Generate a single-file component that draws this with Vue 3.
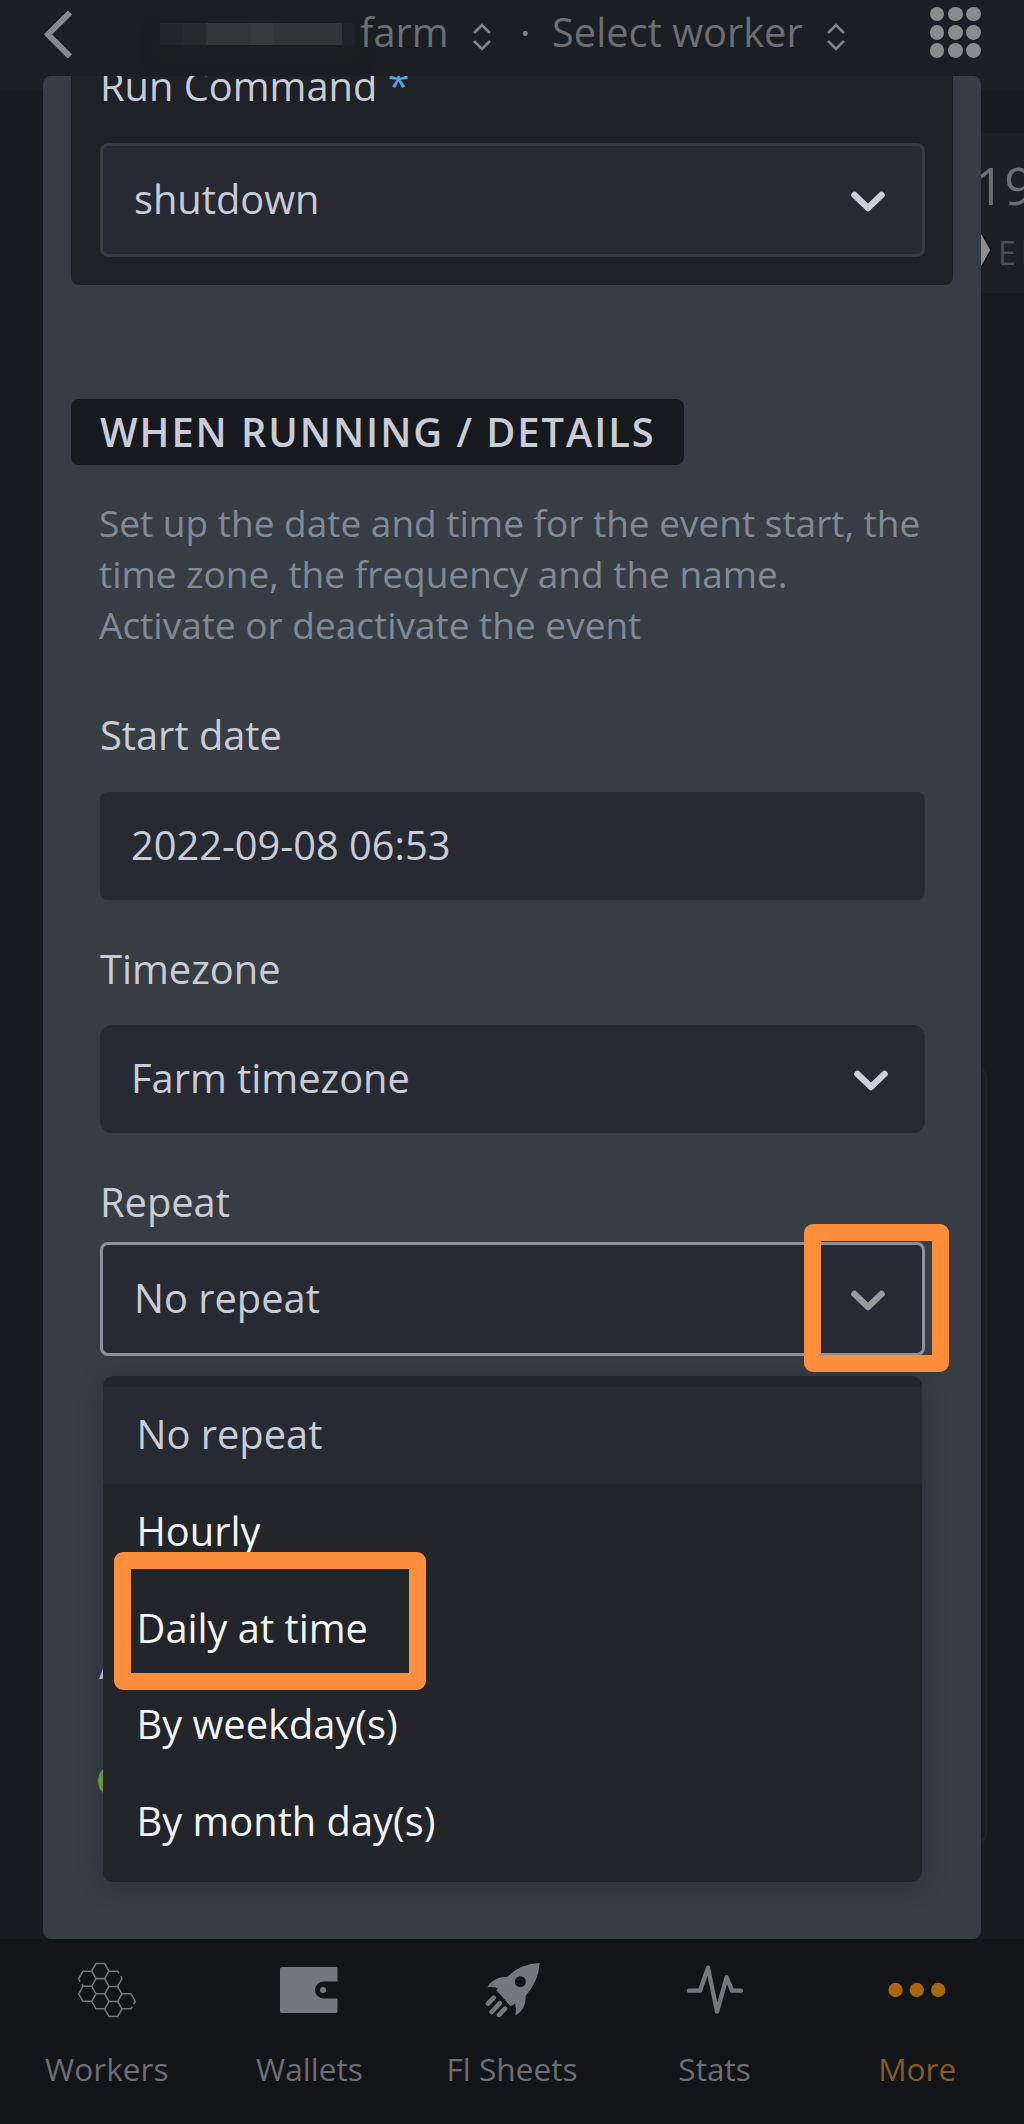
<script setup>
const options = ['No repeat', 'Hourly', 'Daily at time', 'By weekday(s)', 'By month day(s)']
const tabs = [
  { id: 'workers', label: 'Workers' },
  { id: 'wallets', label: 'Wallets' },
  { id: 'sheets', label: 'Fl Sheets' },
  { id: 'stats', label: 'Stats' },
  { id: 'more', label: 'More' },
]
const cells = [[302, 214], [302, 260], [302, 305], [341, 283], [341, 328]]
const hexagon = ([x, y]) =>
  `M${x - 26} ${y}L${x - 13} ${y - 22.5}H${x + 13}L${x + 26} ${y}L${x + 13} ${y + 22.5}H${x - 13}Z`
const honeycomb =
  cells.map(hexagon).join('') +
  'M364 229L367 237L354 259.5M328 214.5H354L358 221' +
  'M276 214.5H250L237 237L241 246M247 253L250 260H276' +
  'M250 260L237 283L250 305H276' +
  'M367 282.5H394L407 305L402 314M398 321L394 327.5H367'
</script>

<template>
  <div class="screen">
    <header class="topbar">
      <svg class="back" width="28" height="48" viewBox="0 0 28 48"><path d="M26 2.500L4 24.500L26 46.500" /></svg>
      <div class="redacted"><i v-for="n in 6" :key="n" :class="'b' + n"></i></div>
      <span class="crumb farm">farm</span>
      <svg class="sort" width="20" height="30" viewBox="0 0 20 30"><path d="M2 11L10 3L18 11M2 19L10 27L18 19" /></svg>
      <span class="crumb dot">·</span>
      <span class="crumb worker">Select worker</span>
      <svg class="sort second" width="20" height="30" viewBox="0 0 20 30"><path d="M2 11L10 3L18 11M2 19L10 27L18 19" /></svg>
      <div class="apps"><i v-for="n in 9" :key="n"></i></div>
    </header>

    <main class="stage">
      <div class="stat-card">
        <span class="stat">19</span>
        <svg class="gem" width="14" height="38" viewBox="0 0 14 38"><path d="M0 2L3 3L12 19L3 35L0 36Z" /></svg>
        <span class="unit">EF</span>
      </div>
      <div class="back-panel"></div>

      <section class="modal">
        <div class="card">
          <div class="label run">Run Command <b>*</b></div>
          <div class="select outlined">
            <span>shutdown</span>
            <svg class="chev" width="34" height="22" viewBox="0 0 34 22"><path d="M3.500 4L17 17L30.500 4" /></svg>
          </div>
        </div>

        <h2 class="badge">WHEN RUNNING / DETAILS</h2>

        <div class="form">
          <p class="hint">Set up the date and time for the event start, the<br>time zone, the frequency and the name.<br>Activate or deactivate the event</p>

          <div class="label start">Start date</div>
          <div class="field"><span>2022-09-08 06:53</span></div>

          <div class="label">Timezone</div>
          <div class="field round">
            <span>Farm timezone</span>
            <svg class="chev" width="34" height="22" viewBox="0 0 34 22"><path d="M3.500 4L17 17L30.500 4" /></svg>
          </div>

          <div class="label repeat">Repeat</div>
          <div class="select focus">
            <span>No repeat</span>
            <svg class="chev" width="34" height="22" viewBox="0 0 34 22"><path d="M3.500 4L17 17L30.500 4" /></svg>
            <div class="marker marker-arrow"></div>
            <ul class="menu">
              <li v-for="(o, i) in options" :key="o" :class="{ active: i === 0 }">
                {{ o }}
                <div v-if="i === 2" class="marker marker-option"></div>
              </li>
            </ul>
          </div>

          <div class="label status">A</div>
          <div class="toggle"></div>
        </div>
      </section>
    </main>

    <nav class="tabs">
      <div v-for="t in tabs" :key="t.id" class="tab" :class="t.id">
        <div class="icon">
          <svg v-if="t.id === 'workers'" width="60" height="58" viewBox="232 184 180 174">
            <path :d="honeycomb" fill="none" stroke="#74777b" stroke-width="4.500" />
          </svg>
          <svg v-else-if="t.id === 'wallets'" width="58" height="46" viewBox="0 0 58 46">
            <path d="M2 0H56Q57.500 0 57.500 2V14.500H43.500A8.500 8.500 0 0 0 43.500 31.500H57.500V44Q57.500 46 56 46H2Q0 46 0 44V2Q0 0 2 0Z" fill="#74777b" />
            <circle cx="43" cy="23" r="3" fill="#74777b" />
          </svg>
          <svg v-else-if="t.id === 'sheets'" width="56" height="56" viewBox="250 182 168 168">
            <path d="M417 185Q360 187 321 226Q277 225 260 258Q278 255 291 261L287 267L330 315L343 307Q348 320 344 343Q377 325 375 284Q414 240 417 185Z" fill="#74777b" />
            <circle cx="359" cy="241" r="16.500" fill="#131418" />
            <path d="M262 307L279 289M273 332L297 306M295 341L313 322" stroke="#74777b" stroke-width="14" stroke-linecap="round" />
          </svg>
          <svg v-else-if="t.id === 'stats'" width="58" height="50" viewBox="858 197 174 150">
            <path d="M867 274H900L924 205L951 337L980 234L996 274H1023" fill="none" stroke="#74777b" stroke-width="13" stroke-linecap="round" stroke-linejoin="round" />
          </svg>
          <svg v-else width="58" height="16" viewBox="0 0 58 16">
            <circle cx="7.500" cy="8" r="7.200" /><circle cx="28.800" cy="8" r="7.200" /><circle cx="50.200" cy="8" r="7.200" />
          </svg>
        </div>
        <span>{{ t.label }}</span>
      </div>
    </nav>
  </div>
</template>

<style>
body {
  background: #171a1e;
}
</style>

<style scoped>
* {
  box-sizing: border-box;
}
.screen {
  width: 1024px;
  height: 2124px;
  display: flex;
  flex-direction: column;
  overflow: hidden;
  background: #171a1e;
  color: #c9ccd6;
  font-family: 'Open Sans', 'Noto Sans', sans-serif;
  font-size: 39.800px;
}

/* top bar */
.topbar {
  flex: none;
  height: 76px;
  display: flex;
  align-items: flex-start;
  background: #1b1e22;
  color: #6c6e72;
}
.topbar svg {
  flex: none;
  fill: none;
}
.back {
  margin: 10px 0 0 44px;
  stroke: #88898c;
  stroke-width: 6;
}
.redacted {
  display: flex;
  width: 195px;
  height: 22px;
  margin: 23px 0 0 88px;
  box-shadow: 0 12px 14px 4px #1d2023;
}
.b1 { width: 23px; background: #222529; }
.b2 { width: 23px; background: #27292d; }
.b3 { width: 45px; background: #333539; }
.b4 { width: 23px; background: #36383c; }
.b5 { width: 68px; background: #323438; }
.b6 { width: 13px; background: #1f2226; }
.crumb {
  flex: none;
  line-height: 54px;
  margin-top: 5px;
  white-space: pre;
}
.farm {
  width: 92px;
  margin-left: 5px;
}
.sort {
  margin: 22px 0 0 20px;
  stroke: #828488;
  stroke-width: 2.6;
}
.dot {
  margin-left: 28px;
  width: 10px;
  color: #828488;
}
.worker {
  margin-left: 22px;
  width: 251px;
}
.second {
  margin-left: 23px;
}
.apps {
  display: grid;
  grid-template-columns: repeat(3, 14.800px);
  gap: 3.600px;
  margin: 6.500px 0 0 83.500px;
}
.apps i {
  height: 14.800px;
  border-radius: 50%;
  background: #8a8b8d;
}

/* page behind the dialog */
.stage {
  flex: none;
  position: relative;
  height: 1863px;
  padding: 0 43px;
  background: linear-gradient(#1b1e22 14px, #171a1e 14px);
}
.stat-card {
  position: absolute;
  left: 900px;
  top: 57px;
  width: 124px;
  height: 160px;
  background: #1c1f23;
  color: #6c6e72;
}
.stat {
  position: absolute;
  left: 75px;
  top: 17px;
  font-size: 51px;
  line-height: 70px;
}
.gem {
  position: absolute;
  left: 79px;
  top: 98px;
  fill: #8f8f8f;
  stroke: #0c0d0f;
  stroke-width: 1.500;
}
.unit {
  position: absolute;
  left: 98px;
  top: 99px;
  color: #4c4e52;
  font-size: 32px;
  line-height: 42px;
  letter-spacing: 5px;
}
.back-panel {
  position: absolute;
  left: 900px;
  top: 992px;
  width: 87px;
  height: 774px;
  border: 2px solid #1e2125;
  border-radius: 8px;
}

/* dialog */
.modal {
  position: relative;
  width: 938px;
  height: 1863px;
  overflow: hidden;
  border-radius: 8px;
  background: #373d45;
}
.card {
  height: 209px;
  margin: 0 28px;
  padding: 0 28px 0 29px;
  background: #1e2125;
  border-radius: 0 0 8px 8px;
  display: flow-root;
}
.label {
  height: 54px;
  margin: 42px 0 29px;
  line-height: 54px;
}
.label.run {
  margin: -17px 0 30px;
}
.label b {
  color: #4da3dd;
  font-weight: 500;
}
.field,
.select {
  position: relative;
  display: flex;
  align-items: center;
  justify-content: space-between;
  height: 108px;
  width: 824.500px;
  padding: 0 37px 3px 31px;
  background: #272a32;
  border-radius: 8px;
}
.field.round {
  border-radius: 12px;
}
.select {
  height: 114px;
  border: 3px solid #373b42;
}
.select.focus {
  border-color: #89929e;
}
.chev {
  fill: none;
  stroke: #cdd0dc;
  stroke-width: 6.500;
  stroke-linecap: round;
  stroke-linejoin: round;
  position: relative;
  top: 3px;
}
.focus .chev {
  stroke: #98999c;
}
.badge {
  width: 613px;
  height: 66px;
  margin: 114px 0 0 28px;
  padding-left: 29px;
  border-radius: 8px;
  background: #16191d;
  font-size: 39.800px;
  font-weight: 600;
  line-height: 65px;
  letter-spacing: 1.950px;
  white-space: nowrap;
}
.form {
  margin: 32px 56px 0 57px;
}
.hint {
  margin: 0 0 0 -1px;
  color: #7f8a96;
  font-size: 37px;
  line-height: 51px;
  white-space: nowrap;
}
.label.start {
  margin: 58px 0 30px;
}
.label.repeat {
  margin-bottom: 13px;
}
.label.status {
  margin: 281px 0 73px -1px;
}
.toggle {
  width: 80px;
  height: 34px;
  margin-left: -2px;
  border-radius: 17px;
  background: #74a340;
}
.menu {
  position: absolute;
  z-index: 1;
  left: 0;
  top: 131px;
  width: 819px;
  height: 506px;
  margin: 0;
  padding: 11px 0;
  list-style: none;
  border-radius: 10px;
  background: #222529;
  box-shadow: 0 4px 24px rgba(20, 24, 30, 0.25);
}
.menu li {
  position: relative;
  height: 96.800px;
  padding: 0 33.500px;
  line-height: 94px;
  color: #f4f5f7;
}
.menu li.active {
  background: #272a32;
  color: #c9ccd6;
}
.marker {
  position: absolute;
  z-index: 2;
  border-radius: 9px;
  border: 17px solid #ff8e3c;
}
.marker-arrow {
  left: 701px;
  top: -21px;
  width: 145px;
  height: 148px;
}
.marker-option {
  left: 11px;
  top: -29px;
  width: 312px;
  height: 138px;
}

/* bottom navigation */
.tabs {
  flex: none;
  display: flex;
  height: 185px;
  padding: 0 5.500px;
  background: #131418;
  color: #6c6e72;
}
.tab {
  flex: 1;
  display: flex;
  flex-direction: column;
  align-items: center;
  font-size: 31.600px;
  line-height: 44px;
}
.icon {
  height: 102px;
  margin-bottom: 6px;
  display: flex;
  align-items: center;
}
.tab.more {
  color: #85592a;
}
.tab.more circle {
  fill: #a8670c;
}
</style>
